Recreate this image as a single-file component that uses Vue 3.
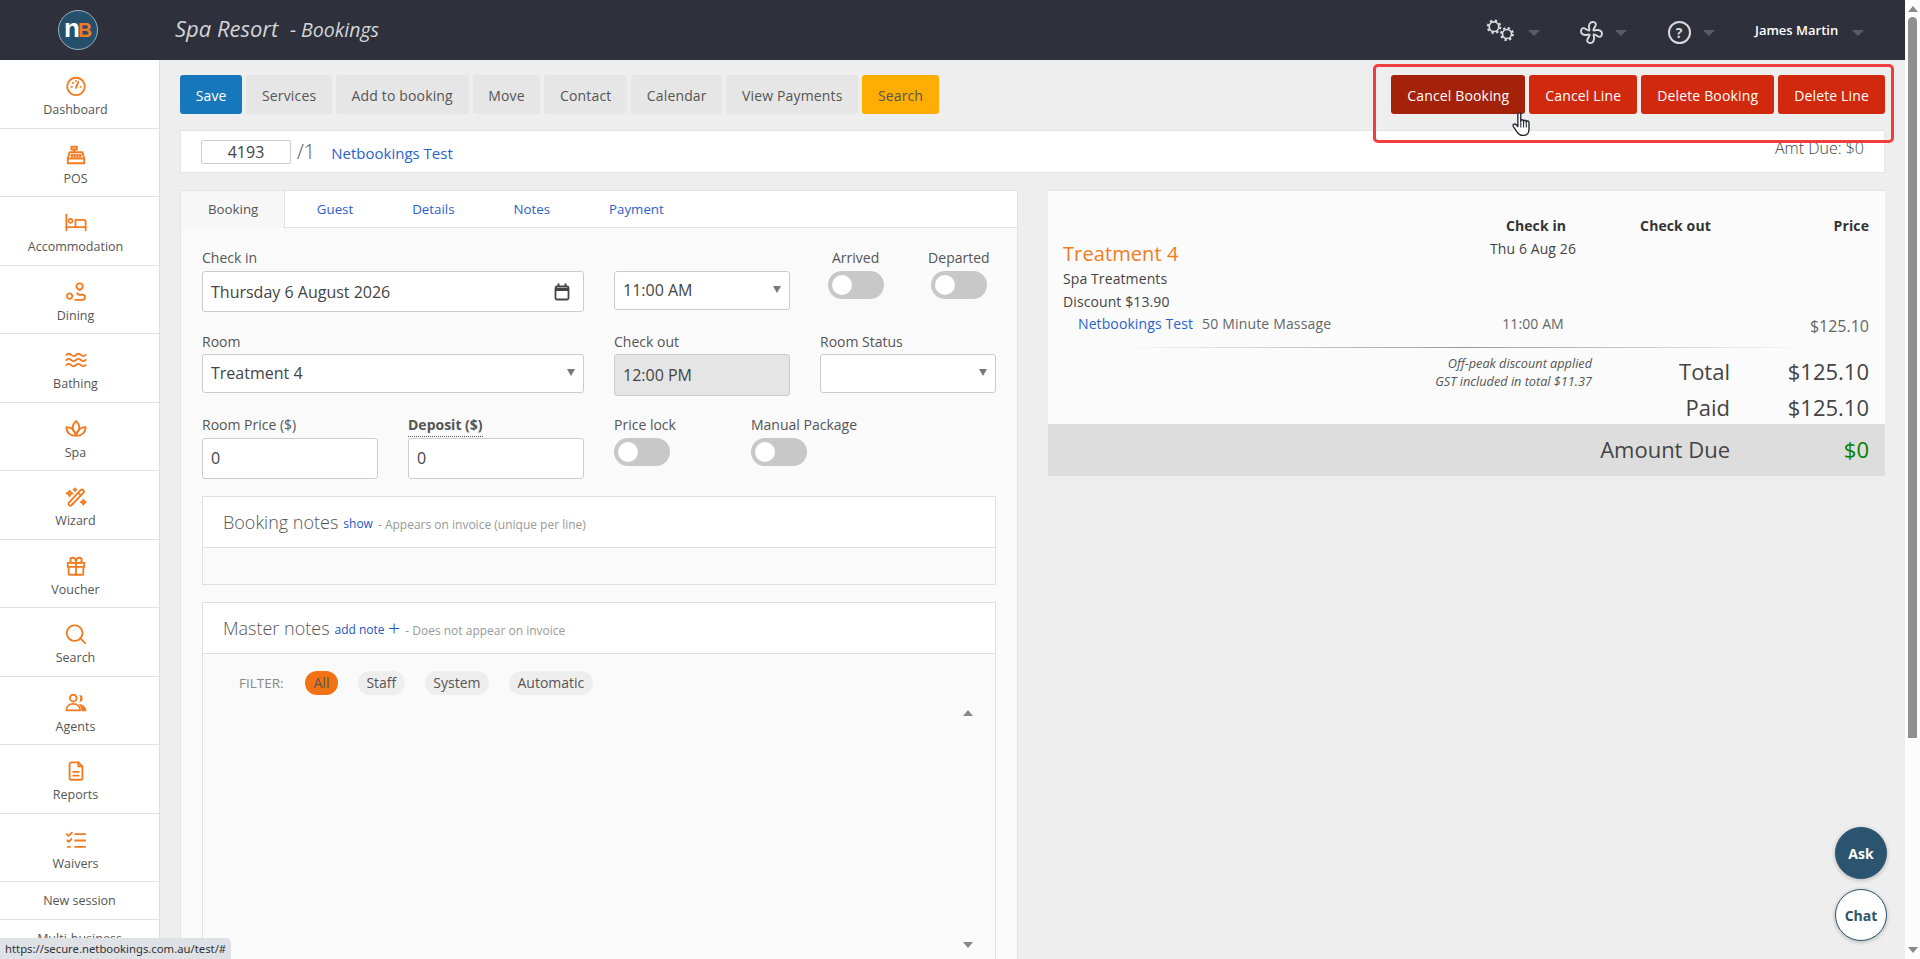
<script setup>
const navItems = [
  { label: 'Dashboard', shapes: ['M12 3a9.5 9.5 0 1 0 .01 0z', 'M12 14l2.5-6.5', 'M7 13h.5M8.5 8.5h.5M12 6.500h.01M17 13h.01'] },
  { label: 'POS', shapes: ['M7 3h6v3H7z', 'M10 6v3', 'M5 9h14l2 7H3z', 'M3 16v5h18v-5', 'M7 12h1M10 12h1M13 12h1M16 12h1M7 14h1M10 14h1M13 14h1M16 14h1'] },
  { label: 'Accommodation', shapes: ['M1.500 3v17', 'M1.500 16.500h21v3.500', 'M22.500 16.500v-6a2 2 0 0 0-2-2h-9v8', 'M6 7.500a2.200 2.200 0 1 0 .01 0z'] },
  { label: 'Dining', shapes: ['M16 2.500a3.500 3.500 0 0 0-3.500 3.500c0 2 3.500 4 3.500 4s3.500-2 3.500-4a3.500 3.500 0 0 0-3.500-3.500z', 'M5 13.500a3 3 0 1 0 .01 0z', 'M11 20.500h8a2.700 2.700 0 0 0 0-5.500h-3.500a2 2 0 0 1-2-2'] },
  { label: 'Bathing', shapes: ['M1.500 6.500q2.600-2.500 5.200 0t5.300 0 5.300 0 5.200 0', 'M1.500 12q2.600-2.500 5.200 0t5.300 0 5.300 0 5.200 0', 'M1.500 17.500q2.600-2.500 5.200 0t5.300 0 5.300 0 5.200 0'] },
  { label: 'Spa', shapes: ['M12 3.500c-3.500 3-4.500 7-2.500 11', 'M12 3.500c3.500 3 4.500 7 2.500 11', 'M1.500 10c0 6 4.500 9.500 10.500 9.500S22.500 16 22.500 10c-4 0-9 2-10.500 9.500C10.500 12 5.500 10 1.500 10z'] },
  { label: 'Wizard', shapes: ['M4 18.500L17 4.500a2 2 0 0 1 3 3L7 21a2 2 0 0 1-3-2.500z', 'M14.500 7.500l2.800 2.800', 'M5 5l1 2 2 1-2 1-1 2-1-2-2-1 2-1zM11 2.500v3M9.500 4h3M20 15l.8 1.800 1.800.8-1.800.8-.8 1.800-.8-1.800-1.800-.8 1.800-.8z'] },
  { label: 'Voucher', shapes: ['M3 8.500h18v4.500H3z', 'M4 13v7.500a1 1 0 0 0 1 1h14a1 1 0 0 0 1-1V13', 'M12 8.500v13', 'M12 8.500H8.500a2.700 2.700 0 1 1 0-5.500c2.500 0 3.500 3 3.500 5.500zM12 8.500h3.500a2.700 2.700 0 1 0 0-5.500C13 3 12 6 12 8.500z'] },
  { label: 'Search', shapes: ['M10.500 2.500a8.500 8.500 0 1 0 .01 0z', 'M16.500 16.500l5.500 5.500'] },
  { label: 'Agents', shapes: ['M9 3a3.700 3.700 0 1 0 .01 0z', 'M1.500 20c0-4 3-7 7.500-7s7.500 3 7.500 7z'], solid: 'M15.500 3.300a3.700 3.700 0 0 1 0 7.400c1.500-2 1.500-5.400 0-7.400zM15 13c4.500 0 8 3 8.500 8H18c0-3-1-6-3-8z' },
  { label: 'Reports', shapes: ['M14.500 2.500H7a2 2 0 0 0-2 2v15a2 2 0 0 0 2 2h10a2 2 0 0 0 2-2V7z', 'M14.500 2.500V7H19', 'M9 13h6M9 17h6'] },
  { label: 'Waivers', shapes: ['M2 5.500l2 2 3.500-3.500', 'M2.500 12.500l1.500 1.500 3-3', 'M11 5.500h11M11 12.500h11M11 19.500h11', 'M3 19.500h2.500'] }
]

const toolButtons = [
  { label: 'Save', kind: 'save' },
  { label: 'Services' },
  { label: 'Add to booking' },
  { label: 'Move' },
  { label: 'Contact' },
  { label: 'Calendar' },
  { label: 'View Payments' },
  { label: 'Search', kind: 'search' }
]

const dangerButtons = [
  { label: 'Cancel Booking', active: true },
  { label: 'Cancel Line' },
  { label: 'Delete Booking' },
  { label: 'Delete Line' }
]

const tabs = ['Booking', 'Guest', 'Details', 'Notes', 'Payment']
const filters = ['All', 'Staff', 'System', 'Automatic']
</script>

<template>
  <div class="page">
    <div class="window">
      <header class="topbar">
        <div class="logo-cell">
          <div class="logo"><span class="logo-n">n</span><span class="logo-b">B</span></div>
        </div>
        <div class="title"><span class="title-main">Spa Resort</span> <span class="title-sub">- Bookings</span></div>
        <div class="top-actions">
          <svg class="gears" viewBox="0 0 28 24" fill="none" stroke="#d9d9d9">
            <circle cx="8" cy="8.700" r="4.800" stroke-width="1.700" />
            <circle cx="8" cy="8.700" r="6.200" stroke-width="2.200" stroke-dasharray="2.400 2.470" />
            <circle cx="21" cy="16" r="4.500" stroke-width="1.700" />
            <circle cx="21" cy="16" r="5.900" stroke-width="2.200" stroke-dasharray="2.300 2.330" />
          </svg>
          <i class="caret caret-gear"></i>
          <svg class="fan" viewBox="0 0 24 24" fill="none" stroke="#d9d9d9" stroke-width="2" stroke-linejoin="round">
            <path
              v-for="r in [0, 90, 180, 270]"
              :key="r"
              :transform="`rotate(${r} 12 12)`"
              d="M10.200 10C8.800 7 9 3 11.500 1.500C13 .8 16 1 16.500 3C17 5 15 6.500 14.500 8C14.200 9 13.900 9.500 13.800 10.200"
            />
          </svg>
          <i class="caret caret-fan"></i>
          <div class="help">?</div>
          <i class="caret caret-help"></i>
          <span class="user">James Martin</span>
          <i class="caret caret-user"></i>
        </div>
      </header>

      <div class="body">
        <nav class="sidebar">
          <a v-for="item in navItems" :key="item.label" class="nav-item">
            <svg class="nav-icon" viewBox="0 0 24 24" fill="none" stroke="#f47a20" stroke-width="2" stroke-linecap="round" stroke-linejoin="round">
              <path v-for="(d, i) in item.shapes" :key="i" :d="d" />
              <path v-if="item.solid" :d="item.solid" fill="#f47a20" stroke="none" />
            </svg>
            <span>{{ item.label }}</span>
          </a>
          <a class="nav-link">New session</a>
          <a class="nav-link">Multi-business</a>
        </nav>

        <main class="main">
          <div class="toolbar">
            <div class="btn-group">
              <button v-for="b in toolButtons" :key="b.label" class="btn" :class="b.kind">{{ b.label }}</button>
            </div>
            <div class="btn-group">
              <button v-for="b in dangerButtons" :key="b.label" class="btn danger" :class="{ active: b.active }">{{ b.label }}</button>
            </div>
          </div>

          <div class="booking-bar">
            <div class="ref-input">4193</div>
            <span class="ref-line">/1</span>
            <a class="guest-link">Netbookings Test</a>
            <span class="amt-due">Amt Due: $0</span>
          </div>

          <div class="columns">
            <section class="left-panel">
              <div class="tabs">
                <a v-for="(t, i) in tabs" :key="t" class="tab" :class="{ current: i === 0 }">{{ t }}</a>
              </div>
              <div class="panel-body">
                <div class="form-grid">
                  <div class="field span-2">
                    <label>Check in</label>
                    <div class="control tall">
                      Thursday 6 August 2026
                      <svg class="cal" viewBox="0 0 16 18" fill="none" stroke="#444" stroke-width="1.800">
                        <rect x="1.500" y="3.500" width="13" height="13" rx="1.500" />
                        <path d="M1.500 6.500h13" stroke-width="3" />
                        <path d="M4.500 0.500v3M11.500 0.500v3" stroke-width="2" />
                      </svg>
                    </div>
                  </div>
                  <div class="field">
                    <label>&nbsp;</label>
                    <div class="control select">11:00 AM<i class="select-arrow"></i></div>
                  </div>
                  <div class="toggle-pair">
                    <div class="toggle-field centered">
                      <label>Arrived</label>
                      <span class="toggle"></span>
                    </div>
                    <div class="toggle-field centered">
                      <label>Departed</label>
                      <span class="toggle"></span>
                    </div>
                  </div>

                  <div class="field span-2 second-row">
                    <label>Room</label>
                    <div class="control select">Treatment 4<i class="select-arrow"></i></div>
                  </div>
                  <div class="field second-row">
                    <label>Check out</label>
                    <div class="control disabled">12:00 PM</div>
                  </div>
                  <div class="field second-row">
                    <label>Room Status</label>
                    <div class="control select"><i class="select-arrow"></i></div>
                  </div>

                  <div class="field">
                    <label>Room Price ($)</label>
                    <div class="control tall number">0</div>
                  </div>
                  <div class="field">
                    <label class="strong"><b>Deposit ($)</b></label>
                    <div class="control tall number">0</div>
                  </div>
                  <div class="toggle-pair wide">
                    <div class="toggle-field">
                      <label>Price lock</label>
                      <span class="toggle"></span>
                    </div>
                    <div class="toggle-field">
                      <label>Manual Package</label>
                      <span class="toggle"></span>
                    </div>
                  </div>
                </div>

                <div class="notes-box">
                  <div class="notes-head">
                    <span class="notes-title">Booking notes</span>
                    <a class="notes-link">show</a>
                    <span class="notes-hint">- Appears on invoice (unique per line)</span>
                  </div>
                  <div class="notes-empty"></div>
                </div>

                <div class="notes-box master">
                  <div class="notes-head">
                    <span class="notes-title">Master notes</span>
                    <a class="notes-link">add note <span class="plus">+</span></a>
                    <span class="notes-hint">- Does not appear on invoice</span>
                  </div>
                  <div class="notes-content">
                    <div class="filters">
                      <span class="filter-label">FILTER:</span>
                      <span v-for="(f, i) in filters" :key="f" class="pill" :class="{ on: i === 0 }">{{ f }}</span>
                    </div>
                    <div class="note-scroll">
                      <i class="tri up"></i>
                      <i class="tri down"></i>
                    </div>
                  </div>
                </div>
              </div>
            </section>

            <section class="invoice">
              <div class="inv-grid">
                <span></span>
                <b class="inv-head center shifted">Check in</b>
                <b class="inv-head center">Check out</b>
                <b class="inv-head right">Price</b>

                <div class="inv-room">
                  <div class="room-name">Treatment 4</div>
                  <div class="room-line">Spa Treatments</div>
                  <div class="room-line">Discount $13.90</div>
                </div>
                <div class="center date-cell">Thu 6 Aug 26</div>
                <span></span>
                <span></span>

                <div class="inv-guest"><a>Netbookings Test</a><span>50 Minute Massage</span></div>
                <div class="center muted time-cell">11:00 AM</div>
                <span></span>
                <div class="right muted price-cell">$125.10</div>
              </div>

              <div class="inv-rule"></div>

              <div class="totals">
                <div class="fine-print">
                  <div>Off-peak discount applied</div>
                  <div>GST included in total $11.37</div>
                </div>
                <div class="total-label">Total</div>
                <div class="total-value">$125.10</div>
                <div class="total-label paid">Paid</div>
                <div class="total-value paid">$125.10</div>
              </div>
              <div class="due-band">
                <span class="due-label">Amount Due</span>
                <span class="due-value">$0</span>
              </div>
            </section>
          </div>
        </main>
      </div>
    </div>

    <div class="scrollbar">
      <i class="tri up"></i>
      <div class="scroll-thumb"></div>
      <i class="tri down"></i>
    </div>

    <!-- overlays from the capture -->
    <div class="highlight"></div>
    <svg class="hand" viewBox="0 0 18 25" fill="#fff" stroke="#1f2430" stroke-width="1.300" stroke-linejoin="round">
      <path d="M5.500 2.200a1.400 1.400 0 0 1 2.800 0v7.300-1a1.400 1.400 0 0 1 2.700 0v1.500-.8a1.300 1.300 0 0 1 2.600 0v1.300-.5a1.300 1.300 0 0 1 2.600 0v6.500c0 3.500-2 6-5.500 6H10c-2.500 0-3.800-1.200-5-3L1.200 14c-1-1.700 1-3.200 2.400-1.900l1.900 1.900z" />
      <path d="M8.300 10v5M11 10.500v4.500M13.600 11v4" fill="none" stroke-width="1" />
    </svg>
    <div class="status-bubble">https://secure.netbookings.com.au/test/#</div>
    <button class="round ask">Ask</button>
    <button class="round chat">Chat</button>
  </div>
</template>

<style>
html, body {
  margin: 0;
  overflow: hidden;
}
</style>

<style scoped>
.page {
  position: relative;
  display: flex;
  width: 100%;
  height: 100vh;
  overflow: hidden;
  font-family: "Open Sans", "Noto Sans", sans-serif;
  font-size: 14px;
  color: #555;
  background: #eee;
}

.window {
  flex: 1;
  min-width: 0;
  display: flex;
  flex-direction: column;
}

.topbar {
  height: 60px;
  flex-shrink: 0;
  display: flex;
  align-items: center;
  background: #2e303c;
}

.logo-cell {
  width: 175px;
  flex-shrink: 0;
  padding-left: 58px;
  box-sizing: border-box;
}

.logo {
  width: 40px;
  height: 40px;
  box-sizing: border-box;
  border: 1px solid #9fb0bb;
  border-radius: 50%;
  background: #24506c;
  display: flex;
  align-items: baseline;
  justify-content: center;
  font-family: "Liberation Sans", sans-serif;
  font-weight: 700;
  line-height: 34px;
}

.logo-n {
  color: #fff;
  font-size: 26px;
}

.logo-b {
  color: #f47a20;
  font-size: 19.500px;
  margin-left: -2px;
}

.title {
  margin-bottom: 4px;
  font-style: italic;
  color: #d4d4d4;
  white-space: nowrap;
}

.title-main {
  font-size: 22px;
}

.title-sub {
  margin-left: 8px;
  font-size: 19.500px;
}

.top-actions {
  margin-left: auto;
  width: 419px;
  flex-shrink: 0;
  display: flex;
  align-items: center;
  color: #fff;
}

.gears {
  width: 28px;
  height: 24px;
}

.caret {
  width: 0;
  height: 0;
  border-left: 6px solid transparent;
  border-right: 6px solid transparent;
  border-top: 6px solid #5b5d62;
  margin-top: 6px;
}

.caret-gear { margin-left: 14px; }
.fan { width: 23px; height: 23px; margin-left: 40px; margin-top: 4px; }
.caret-fan { margin-left: 12px; }
.help {
  width: 23px;
  height: 23px;
  box-sizing: border-box;
  margin-left: 40.500px;
  margin-top: 4px;
  border: 2px solid #d9d9d9;
  border-radius: 50%;
  color: #d9d9d9;
  font-weight: 700;
  font-size: 14px;
  line-height: 19px;
  text-align: center;
}
.caret-help { margin-left: 12.500px; }
.user { margin-left: 40px; font-size: 13px; font-weight: 600; white-space: nowrap; }
.caret-user { margin-left: 14px; }

.body {
  flex: 1;
  min-height: 0;
  display: flex;
}

.sidebar {
  width: 160px;
  flex-shrink: 0;
  box-sizing: border-box;
  background: #fff;
  border-right: 1px solid #ddd;
}

.nav-item {
  height: 68.5px;
  box-sizing: border-box;
  padding: 15px 8px 0 0;
  display: flex;
  flex-direction: column;
  align-items: center;
  border-bottom: 1px solid #e4e0e4;
  font-size: 12.500px;
  line-height: 24px;
  color: #555;
}

.nav-icon {
  width: 22px;
  height: 22px;
  margin-bottom: 1px;
  flex-shrink: 0;
}

.nav-link {
  display: block;
  height: 38px;
  box-sizing: border-box;
  border-bottom: 1px solid #e4e0e4;
  text-align: center;
  font-size: 12.500px;
  line-height: 38px;
  color: #555;
}

.main {
  flex: 1;
  min-width: 0;
  padding: 15px 20px 0 20px;
}

.toolbar {
  display: flex;
  justify-content: space-between;
}

.btn-group {
  display: flex;
  gap: 4px;
}

.btn {
  height: 39px;
  padding: 2px 15.700px 0;
  border: 0;
  border-radius: 3px;
  background: #e6e6e6;
  color: #555;
  font: inherit;
  letter-spacing: 0.150px;
  white-space: nowrap;
}

.btn.save { background: #1777bb; color: #fff; }
.btn.search { background: #ffad00; }
.btn.danger { padding: 2px 16px 0; background: #d1290e; color: #fff; }
.btn.danger.active { background: #a4210a; }

.booking-bar {
  margin-top: 16px;
  height: 43px;
  box-sizing: border-box;
  display: flex;
  align-items: center;
  padding: 0 20px 0 20px;
  background: #fff;
  border: 1px solid #e4e4e4;
}

.ref-input {
  width: 90px;
  height: 24px;
  box-sizing: border-box;
  border: 1px solid #ccc;
  border-radius: 2px;
  text-align: center;
  font-size: 16px;
  line-height: 22px;
  color: #444;
}

.ref-line {
  margin-left: 6px;
  font-size: 20px;
  font-weight: 300;
  line-height: 24px;
}

.guest-link {
  margin-left: 16px;
  margin-top: 2px;
  font-size: 15px;
  color: #2a62cc;
}

.amt-due {
  margin-left: auto;
  margin-top: -8px;
  font-size: 16px;
  font-weight: 300;
  color: #444;
}

.columns {
  margin-top: 17px;
  display: flex;
  align-items: flex-start;
  gap: 30px;
}

.left-panel {
  width: 838px;
  flex-shrink: 0;
  box-sizing: border-box;
  border: 1px solid #e2e2e2;
  background: #fafafa;
}

.tabs {
  display: flex;
  height: 36px;
  background: #fff;
  border-bottom: 1px solid #e2e2e2;
  font-size: 13.300px;
}

.tab {
  padding: 0 29.500px;
  line-height: 36px;
  color: #2a62cc;
}

.tab.current {
  padding: 0 26px 0 27px;
  margin-right: 2px;
  height: 37px;
  color: #555;
  background: #f7f7f7;
  border-right: 1px solid #e2e2e2;
}

.panel-body {
  padding: 20px 21px 0 21px;
}

.form-grid {
  display: grid;
  grid-template-columns: repeat(4, 175.500px);
  column-gap: 30.500px;
  row-gap: 19px;
}

.span-2 {
  grid-column: span 2;
}

label {
  display: block;
  height: 20px;
  margin-bottom: 3px;
  line-height: 20px;
  white-space: nowrap;
}

.second-row label {
  margin-top: 1px;
  margin-bottom: 2px;
}

.strong {
  width: fit-content;
  border-bottom: 1px dotted #555;
  margin-bottom: 1px;
  height: 21px;
}

.control {
  position: relative;
  height: 39px;
  box-sizing: border-box;
  display: flex;
  align-items: center;
  padding-left: 8px;
  background: #fff;
  border: 1px solid #ccc;
  border-radius: 3px;
  font-size: 16px;
  color: #444;
}

.control.select,
.control.number {
  padding-bottom: 2px;
}

.control.tall {
  height: 41px;
}

.control.disabled {
  height: 42px;
  background: #e5e5e5;
}

.select-arrow {
  margin-left: auto;
  margin-right: 8px;
  width: 0;
  height: 0;
  border-left: 4px solid transparent;
  border-right: 4px solid transparent;
  border-top: 7px solid #777;
}

.cal {
  margin-left: auto;
  margin-right: 13px;
  width: 16px;
  height: 18px;
}

.toggle-pair {
  display: flex;
  justify-content: center;
  gap: 30px;
  margin-left: -1px;
}

.toggle-pair.wide {
  grid-column: span 2;
  justify-content: flex-start;
  gap: 81px;
  margin-left: 0;
}

.toggle-field.centered {
  width: 74px;
  display: flex;
  flex-direction: column;
  align-items: center;
}

.toggle-pair.wide .toggle-field {
  width: 56px;
}

.toggle {
  display: block;
  position: relative;
  width: 56px;
  height: 28px;
  border-radius: 14px;
  background: #c8c8c8;
}

.toggle::after {
  content: "";
  position: absolute;
  left: 4px;
  top: 4px;
  width: 20px;
  height: 20px;
  border-radius: 50%;
  background: #fff;
}

.notes-box {
  margin-top: 17px;
  width: 794px;
  box-sizing: border-box;
  border: 1px solid #e0e0e0;
}

.notes-head {
  height: 51px;
  box-sizing: border-box;
  padding-left: 20px;
  display: flex;
  align-items: center;
  gap: 5px;
  background: #fff;
  border-bottom: 1px solid #e0e0e0;
  white-space: nowrap;
}

.notes-title {
  font-size: 18px;
  font-weight: 300;
}

.notes-link {
  font-size: 12px;
  color: #1a56c4;
  margin-top: 3px;
}

.plus {
  font-size: 22px;
  font-weight: 300;
  line-height: 12px;
  vertical-align: -2px;
}

.notes-hint {
  font-size: 12px;
  color: #999;
  margin-top: 4px;
}

.notes-empty {
  height: 36px;
}

.notes-content {
  padding: 17px 0 0 36px;
  height: 330px;
}

.filters {
  display: flex;
  align-items: center;
  gap: 20px;
}

.filter-label {
  width: 46px;
  font-size: 13.500px;
  white-space: nowrap;
  color: #888;
}

.pill {
  height: 24px;
  padding: 0 8.500px;
  border-radius: 12px;
  background: #eee;
  line-height: 24px;
  color: #555;
}

.pill.on {
  background: #f47216;
}

.note-scroll {
  margin: 15px 0 0 auto;
  width: 17px;
  margin-right: 19px;
  height: 238px;
  display: flex;
  flex-direction: column;
  justify-content: space-between;
  align-items: center;
}

.tri {
  display: block;
  width: 0;
  height: 0;
  border-left: 5px solid transparent;
  border-right: 5px solid transparent;
}

.tri.up { border-bottom: 6px solid #888; }
.tri.down { border-top: 6px solid #888; }

.invoice {
  width: 837px;
  flex-shrink: 0;
  box-sizing: border-box;
  background: #fbfbfb;
  border-top: 1px solid #e4e4e4;
}

.inv-grid {
  display: grid;
  grid-template-columns: 402px 136px 149px 119px;
  padding: 25px 0 0 15px;
  line-height: 20px;
  letter-spacing: 0.100px;
  color: #444;
}

.inv-head {
  color: #333;
}

.center { text-align: center; }
.right { text-align: right; }
.shifted { padding-left: 6px; }
.muted { color: #666; }

.date-cell {
  padding-top: 3px;
}

.time-cell {
  padding-top: 1px;
}

.inv-room {
  padding-top: 4px;
}

.room-name {
  font-size: 20px;
  line-height: 27px;
  color: #f47a20;
}

.room-line {
  line-height: 23px;
}

.inv-guest {
  padding: 1px 0 0 15px;
  display: flex;
  gap: 9px;
}

.inv-guest span {
  letter-spacing: 0.170px;
  color: #666;
}

.inv-guest a {
  color: #2a62cc;
}

.price-cell {
  padding-top: 3px;
  font-size: 16px;
  letter-spacing: 0;
}

.inv-rule {
  margin: 11px 77px 0 74px;
  height: 1px;
  background: linear-gradient(to right, transparent, #999 50%, transparent);
}

.totals {
  display: grid;
  grid-template-columns: 529px 138px 139px;
  grid-auto-rows: 35px;
  padding: 6px 0 0 15px;
}

.fine-print {
  grid-row: span 2;
  padding-top: 1px;
  text-align: right;
  font-size: 12.700px;
  font-style: italic;
  line-height: 17.500px;
  color: #555;
}

.total-label,
.total-value,
.due-label,
.due-value {
  font-size: 22px;
  line-height: 35px;
  text-align: right;
  color: #444;
}

.paid {
  padding-top: 1px;
}

.due-label,
.due-value {
  margin-top: -2px;
}

.due-band {
  height: 52px;
  display: grid;
  grid-template-columns: 682px 139px;
  align-items: center;
  background: #ddd;
}

.due-value {
  color: #008000;
}

.scrollbar {
  width: 15px;
  flex-shrink: 0;
  display: flex;
  flex-direction: column;
  align-items: center;
  background: #fcfcfc;
}

.scrollbar .tri.up {
  margin-top: 6px;
  margin-bottom: 5px;
}

.scrollbar .tri.down {
  margin-top: auto;
  margin-bottom: 6px;
}

.scroll-thumb {
  width: 9px;
  height: 721px;
  border-radius: 5px 5px 0 0;
  background: #8f8f8f;
}

.highlight {
  position: absolute;
  left: 1373px;
  top: 64px;
  width: 521px;
  height: 79px;
  box-sizing: border-box;
  border: 3px solid #f03e3e;
  border-radius: 5px;
}

.hand {
  position: absolute;
  left: 1512px;
  top: 112px;
  width: 19px;
  height: 26px;
}

.status-bubble {
  position: absolute;
  left: 0;
  bottom: 0;
  height: 21px;
  padding: 0 5px;
  background: #dee1e6;
  border-top-right-radius: 5px;
  font-family: "Noto Sans", sans-serif;
  font-size: 11.300px;
  line-height: 21px;
  color: #333;
}

.round {
  position: absolute;
  left: 1835px;
  width: 52px;
  height: 52px;
  padding: 0;
  border-radius: 50%;
  border: 1px solid #2a5470;
  font-family: inherit;
  font-size: 14px;
  font-weight: 700;
  box-shadow: 0 1px 4px rgba(0, 0, 0, 0.25);
}

.ask {
  top: 827px;
  background: #2a5470;
  color: #fff;
}

.chat {
  top: 889px;
  background: #fff;
  color: #2a5470;
}
</style>
